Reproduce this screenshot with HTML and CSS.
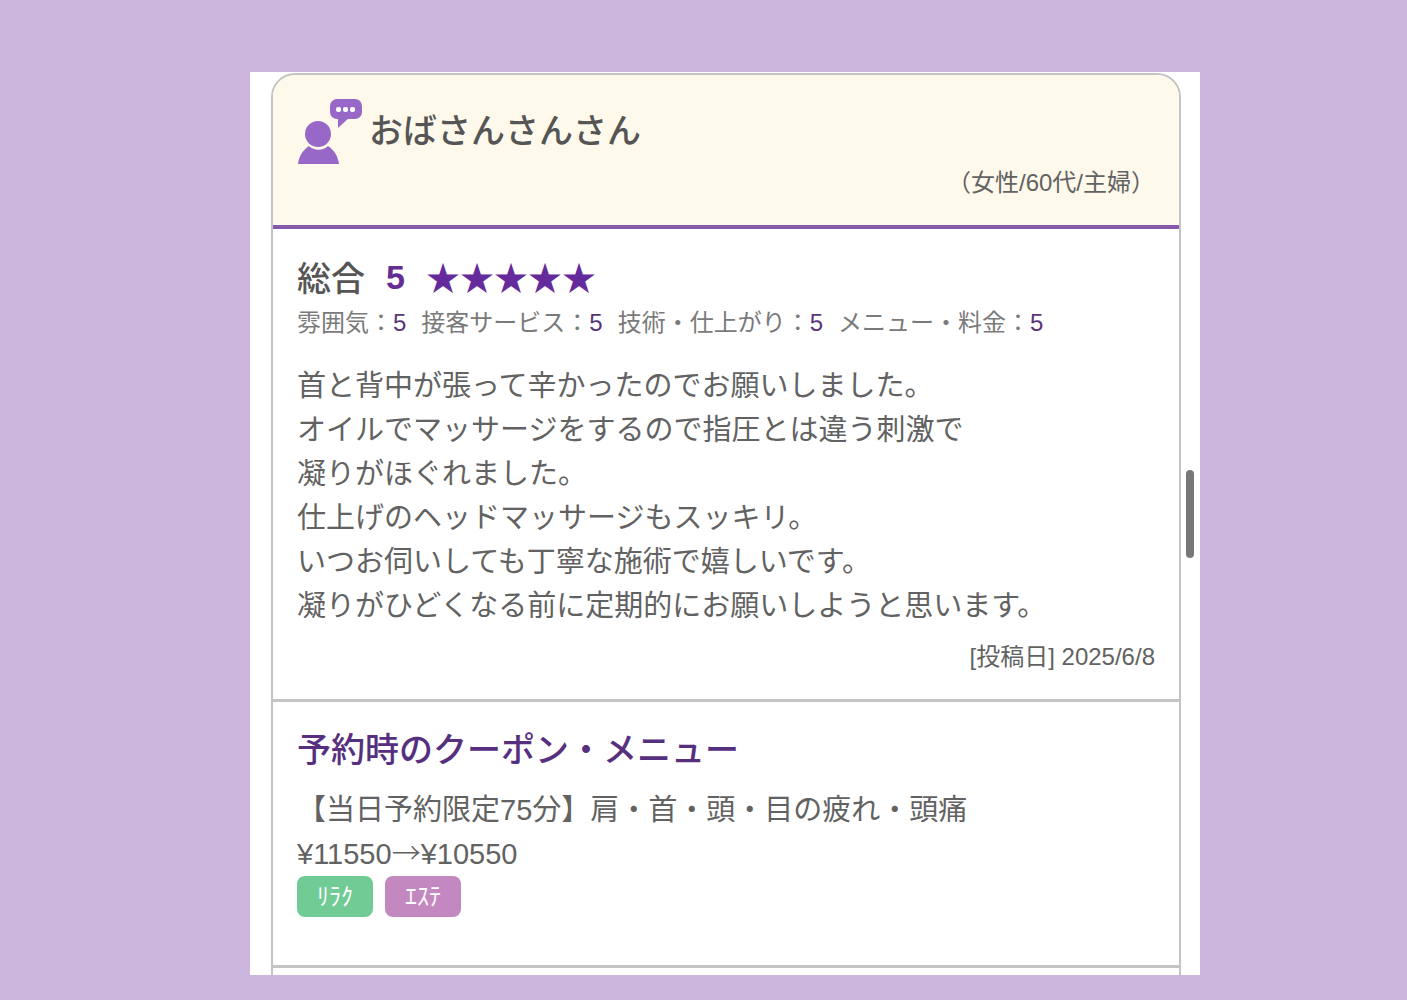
FILE: index.html
```html
<!DOCTYPE html>
<html lang="ja">
<head>
    <meta charset="UTF-8">
    <meta name="viewport" content="width=device-width, initial-scale=1.0">
    <title>口コミ</title>
    <link rel="stylesheet" href="styles.css">
</head>
<body>
    <main class="review-window">
        <article class="review-card">
            <header class="review-header">
                <div class="reviewer">
                    <svg class="reviewer-icon" viewBox="0 0 66 66" aria-hidden="true">
                        <rect x="33" y="0" width="32" height="20" rx="7"/>
                        <path d="M41 18 L41 29 L53 18 Z"/>
                        <g class="dots">
                            <rect x="39" y="8" width="5" height="5" rx="2"/>
                            <rect x="46" y="8" width="5" height="5" rx="2"/>
                            <rect x="53" y="8" width="5" height="5" rx="2"/>
                        </g>
                        <path d="M1 65 C2 57 6 51 12 47 C17 52 26 52 31 47 C37 51 41 57 42 65 Z"/>
                        <circle cx="21" cy="35" r="13"/>
                    </svg>
                    <h2>おばさんさんさん</h2>
                </div>
                <p class="reviewer-profile">（女性/60代/主婦）</p>
            </header>

            <section class="review-body">
                <div class="total-score">
                    <span class="score-label">総合</span>
                    <span class="score">5</span>
                    <span class="stars">★★★★★</span>
                </div>
                <ul class="score-list">
                    <li>雰囲気：<span class="score">5</span></li>
                    <li>接客サービス：<span class="score">5</span></li>
                    <li>技術・仕上がり：<span class="score">5</span></li>
                    <li>メニュー・料金：<span class="score">5</span></li>
                </ul>
                <p class="comment">
                    首と背中が張って辛かったのでお願いしました。<br>
                    オイルでマッサージをするので指圧とは違う刺激で<br>
                    凝りがほぐれました。<br>
                    仕上げのヘッドマッサージもスッキリ。<br>
                    いつお伺いしても丁寧な施術で嬉しいです。<br>
                    凝りがひどくなる前に定期的にお願いしようと思います。
                </p>
                <p class="post-date">[投稿日] 2025/6/8</p>
            </section>

            <section class="coupon">
                <h3>予約時のクーポン・メニュー</h3>
                <p>【当日予約限定75分】肩・首・頭・目の疲れ・頭痛</p>
                <p>¥11550<span class="arrow">→</span>¥10550</p>
                <ul class="tags">
                    <li class="tag tag-relax">ﾘﾗｸ</li>
                    <li class="tag tag-esthe">ｴｽﾃ</li>
                </ul>
            </section>
        </article>
        <div class="scroll-thumb"></div>
    </main>
</body>
</html>
```

FILE: styles.css
```css
* {
    box-sizing: border-box;
}

body {
    margin: 0;
    padding: 72px 207px 25px 250px;
    background-color: #ccb6dd;
    color: #626262;
    font-family: "Liberation Sans", "Noto Sans CJK JP", sans-serif;
    font-size: 29px;
    line-height: 44px;
}

h2,
h3,
p,
ul {
    margin: 0;
    padding: 0;
}

ul {
    list-style: none;
}

.review-window {
    position: relative;
    padding: 1px 19px 0 21px;
    background-color: #fff;
}

.review-card {
    border: 2px solid #c4c4c4;
    border-bottom: none;
    border-radius: 24px 24px 0 0;
    overflow: hidden;
}

.review-header {
    padding: 24px;
    background-color: #fef9eb;
    border-bottom: 4px solid #8659ab;
}

.reviewer {
    display: flex;
    gap: 6px;
}

.reviewer-icon {
    width: 66px;
    height: 66px;
    fill: #9868c9;
}

.reviewer-icon .dots {
    fill: #fff;
}

.reviewer h2 {
    padding-top: 10px;
    color: #555;
    font-size: 34px;
    font-weight: 500;
}

.reviewer-profile,
.post-date {
    font-size: 24px;
    line-height: 36px;
    text-align: right;
}

.review-body {
    padding: 26px 24px 24px;
}

.score {
    color: #59357a;
}

.total-score {
    display: flex;
    gap: 21px;
    color: #555;
    font-size: 34px;
}

.score-label {
    font-family: "Noto Sans CJK JP", sans-serif;
    font-weight: 500;
}

.total-score .score {
    color: #642d94;
    font-weight: bold;
}

.stars {
    color: #652a9b;
    font-family: "Noto Sans CJK JP", sans-serif;
}

.score-list {
    display: flex;
    flex-wrap: wrap;
    gap: 15px;
    margin-top: 6px;
    color: #7a7a7a;
    font-size: 24px;
    line-height: 36px;
}

.comment {
    margin: 23px 0 11px;
}

.coupon {
    padding: 26px 24px 48px;
    border-top: 3px solid #c4c4c4;
    border-bottom: 3px solid #c4c4c4;
    margin-bottom: 7px;
}

.coupon h3 {
    margin-bottom: 16px;
    color: #56307f;
    font-size: 34px;
    font-weight: 500;
}

.arrow {
    font-family: "Noto Sans CJK JP", sans-serif;
    font-weight: 300;
    line-height: 1;
}

.tags {
    display: flex;
    gap: 12px;
}

.tag {
    padding: 0 20px;
    border-radius: 8px;
    color: #fff;
    font-size: 24px;
    line-height: 41px;
}

.tag-relax {
    background-color: #70cb95;
}

.tag-esthe {
    background-color: #c488c1;
}

.scroll-thumb {
    position: absolute;
    top: 398px;
    right: 6px;
    width: 8px;
    height: 88px;
    border-radius: 4px;
    background-color: #777;
}
```
